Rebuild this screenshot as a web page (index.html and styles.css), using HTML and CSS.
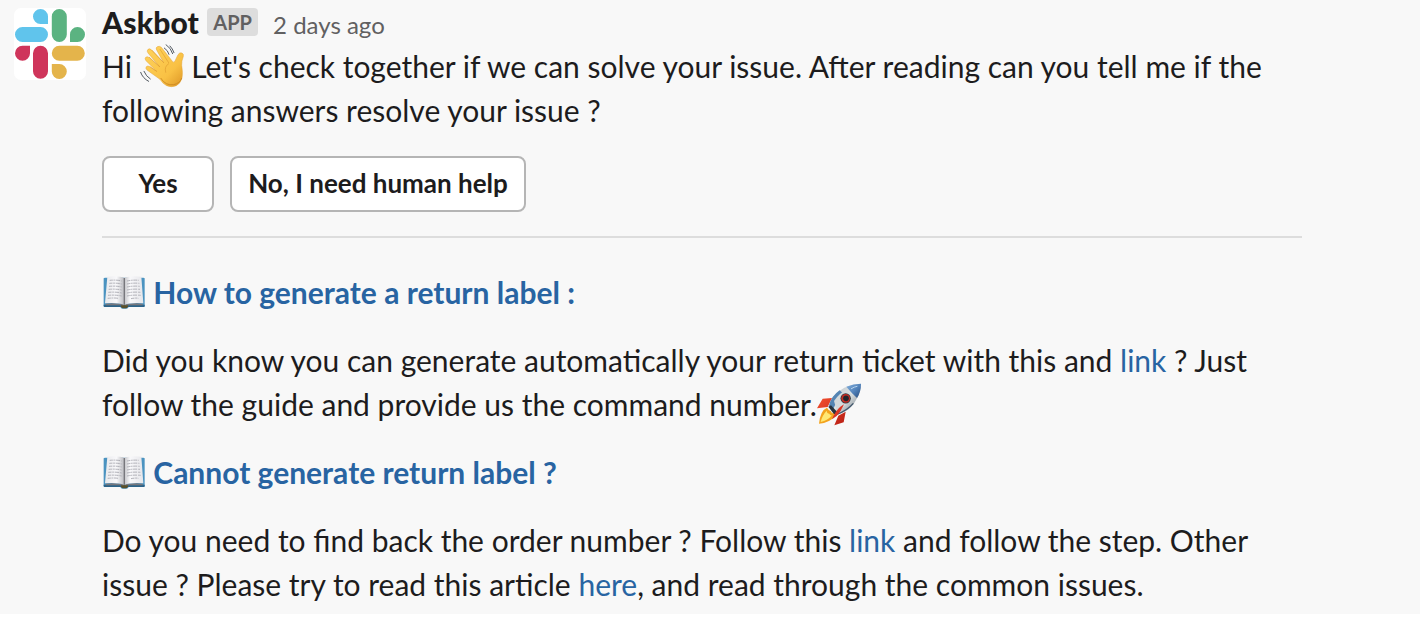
FILE: index.html
```html
<!DOCTYPE html>
<html lang="en">
<head>
<meta charset="utf-8">
<title>Askbot</title>
<link rel="stylesheet" href="styles.css">
</head>
<body>
<svg class="defs" aria-hidden="true">
  <defs>
    <linearGradient id="skin" x1="0" y1="0" x2="1" y2="1"><stop offset="0" stop-color="#ffd35c"/><stop offset=".65" stop-color="#f9c144"/><stop offset="1" stop-color="#dc9424"/></linearGradient>
    <linearGradient id="pageL" x1="0" x2="1"><stop offset="0" stop-color="#e9e9ec"/><stop offset=".6" stop-color="#f8f8fa"/><stop offset="1" stop-color="#b9b9be"/></linearGradient>
    <linearGradient id="pageR" x1="0" x2="1"><stop offset="0" stop-color="#c4c4c8"/><stop offset=".3" stop-color="#f8f8fa"/><stop offset="1" stop-color="#e6e6ea"/></linearGradient>
    <linearGradient id="hull" x1="0" y1="0" x2="1" y2="1"><stop offset=".1" stop-color="#b5c0c8"/><stop offset=".5" stop-color="#dfe3e4"/><stop offset=".95" stop-color="#6d7982"/></linearGradient>
    <linearGradient id="nose" x1="0" y1="0" x2="1" y2="1"><stop offset="0" stop-color="#86b2df"/><stop offset=".55" stop-color="#5080b8"/><stop offset="1" stop-color="#264a7a"/></linearGradient>
    <linearGradient id="fin" x1="0" y1="0" x2="1" y2="1"><stop offset="0" stop-color="#f4502f"/><stop offset="1" stop-color="#b81e14"/></linearGradient>
    <symbol id="book" viewBox="18 18 132 132">
      <path d="M23 43q1-2 4-2h115q3 0 4 2v83q0 3-3 3H98q-2 5-7 5h-12q-4 0-6-5H26q-3 0-3-3z" fill="#4b93c0"/>
      <path d="M23 122h123v4q0 3-3 3H26q-3 0-3-3z" fill="#2c6389"/>
      <path d="M75 122h21v6q-3 5-7 5h-7q-5 0-7-5z" fill="#58502b"/>
      <path d="M29 119q34-3 51 2l5 3 5-3q18-5 50-2v5H29z" fill="#77777d"/>
      <path d="M34 38q37-3 51 4v81q-19-8-58-5z" fill="url(#pageL)"/>
      <path d="M136 38q-37-3-51 4v81q19-8 57-5z" fill="url(#pageR)"/>
      <path d="M85 42v80" stroke="#77777c" stroke-width="4"/>
      <g fill="none" stroke="#a7a7af" stroke-width="2.6" stroke-dasharray="9 2 6 2 12 3"><path d="M41 49q22-2 36 2M40 58q22-2 37 2M39 67q22-2 38 2M38 76q22-2 39 2M37 85q22-2 40 2M36 94q22-2 41 2M35 103q20-2 32 0M93 51q18-4 36-2M93 60q18-4 37-2M93 69q18-4 38-2M93 78q18-4 39-2M93 87q18-4 40-2M93 96q18-4 41-2M105 104q14-3 22-1"/></g>
    </symbol>
  </defs>
</svg>
<main class="message">
  <svg class="avatar" viewBox="0 0 72 72" role="img" aria-label="Askbot">
    <rect width="72" height="72" rx="7" fill="#fff"/>
    <path fill="#60c4ec" d="M34 16h-7.500a7.500 7.500 0 1 1 7.500-7.500zM8.500 19h18a7.500 7.500 0 0 1 0 15h-18a7.500 7.500 0 0 1 0-15z"/>
    <path fill="#5bb381" d="M37.800 8.500a7.500 7.500 0 0 1 15 0v18a7.500 7.500 0 0 1-15 0zM56 34v-7.500a7.500 7.500 0 1 1 7.500 7.500z"/>
    <path fill="#cf355b" d="M16 37.800v7.500a7.500 7.500 0 1 1-7.500-7.500zM19 45.300a7.500 7.500 0 0 1 15 0v18a7.500 7.500 0 0 1-15 0z"/>
    <path fill="#e4b44b" d="M45.300 37.800h18a7.500 7.500 0 0 1 0 15h-18a7.500 7.500 0 0 1 0-15zM37.800 56h7.500a7.500 7.500 0 1 1-7.500 7.500z"/>
  </svg>
  <div class="content">
    <header class="meta">
      <span class="name">Askbot</span>
      <span class="badge">APP</span>
      <span class="time">2 days ago</span>
    </header>
    <p class="text">Hi <svg class="emoji" viewBox="30 24 132 132" role="img" aria-label="Waving hand">
      <path d="M94 34l34 43q4 4 7-2l9-19q5-8 12-5 6 3 4 10-6 15-5 27 4 24 1 38-4 16-17 23-15 6-29 0-11-5-20-19L51 102q-6-6-2-10 4-4 10 0l21 14-32-32q-5-6-1-10 4-4 11 1l31 27-35-41q-5-6 0-11 5-4 11 2l36 38-21-38q-4-7 2-10 6-3 12 2z" fill="url(#skin)" stroke="#e2a334" stroke-width="1.500" stroke-linejoin="round"/>
      <path d="M89 92L58 64M101 80L66 43M80 106L60 92M116 80L90 40M116 83q-14 8-9 26" fill="none" stroke="#df9d31" stroke-width="2" stroke-linecap="round"/>
      <path d="M92 126q15 24 39 20 19-4 24-20" fill="none" stroke="#c98621" stroke-width="2.500"/>
      <path d="M108 26q15 10 20 27M103 36q11 7 14 19M42 106q6 15 19 23M32 109q6 18 24 27M120 30q8 8 12 20" fill="none" stroke="#555c64" stroke-width="3" stroke-linecap="round"/>
    </svg> Let's check together if we can solve your issue. After reading can you tell me if the<br>following answers resolve your issue ?</p>
    <div class="actions">
      <button class="button button-yes">Yes</button>
      <button class="button">No, I need human help</button>
    </div>
    <hr class="divider">
    <h2 class="title"><svg class="emoji" role="img" aria-label="Open book"><use href="#book"/></svg> How to generate a return label :</h2>
    <p class="text">Did you know you can generate automatically your return ticket with this and <a class="link">link</a> ? Just<br>follow the guide and provide us the command number.<svg class="emoji emoji-rocket" viewBox="21 21 132 132" role="img" aria-label="Rocket">
      <path d="M66 66L38 68 21 97l32-4zM85 119l22-12-6 32-28 9z" fill="url(#fin)"/>
      <path d="M51 95q-20 8-24 48 31-1 51-25-5 0-7-7-7 2-8-5-7-2-12-11z" fill="#f3a31d"/>
      <path d="M50 104q-13 13-18 34 22-5 34-20-6 1-8-5-7 0-8-9z" fill="#ffe873"/>
      <path d="M55 92Q67 54 103 35q22-11 50-12 0 24-12 44-17 38-60 50-9-7-26-25z" fill="url(#hull)"/>
      <path d="M109 32q21-9 44-9 0 24-12 43-17-16-32-34z" fill="url(#nose)"/>
      <path d="M57 89q6-28 32-46l14 13q-24 18-34 44z" fill="#5585b3"/>
      <path d="M72 75q16-25 39-34l17 18q-20 31-47 47z" fill="#d3d9db"/>
      <path d="M80 115q31-11 50-33" fill="none" stroke="#40566b" stroke-width="4"/>
      <path d="M55 92l8-4 18 19-2 10-8-4z" fill="#29343d"/>
      <circle cx="107" cy="67" r="15.500" fill="#30383f"/>
      <circle cx="107" cy="67" r="13" fill="#c42b22"/>
      <circle cx="108" cy="67" r="8.500" fill="#22252c"/>
      <path d="M91 92l11-7q-8 20-22 35l-14 10q8-23 25-38z" fill="#da3524"/>
      <path d="M124 38q9-6 17-7" fill="none" stroke="#b8d4ee" stroke-width="3" stroke-linecap="round"/>
    </svg></p>
    <h2 class="title"><svg class="emoji" role="img" aria-label="Open book"><use href="#book"/></svg> Cannot generate return label ?</h2>
    <p class="text">Do you need to find back the order number ? Follow this <a class="link">link</a> and follow the step. Other<br>issue ? Please try to read this article <a class="link">here</a>, and read through the common issues.</p>
  </div>
</main>
</body>
</html>
```
FILE: styles.css
```css
body {
  margin: 0;
  background: #fff;
  font-family: Lato, "Liberation Sans", sans-serif;
  color: #1d1c1d;
}
.defs { position: absolute; width: 0; height: 0; }
.message {
  display: flex;
  gap: 16px;
  box-sizing: border-box;
  height: 614px;
  padding: 8px 0 0 14px;
  background: #f8f8f8;
}
.avatar { width: 72px; height: 72px; flex: none; }
.content { width: 1200px; white-space: nowrap; }
.meta { display: flex; height: 36px; }
.name { font-size: 30px; font-weight: 900; line-height: 28px; letter-spacing: 0.15px; }
.badge {
  box-sizing: border-box;
  width: 51px;
  height: 28px;
  margin-left: 8px;
  border-radius: 4px;
  background: #dddddd;
  color: #616061;
  font-size: 20px;
  font-weight: 700;
  line-height: 29px;
  text-align: center;
}
.time { margin-left: 15px; color: #616061; font-size: 24px; line-height: 34px; }
.text, .title { margin: 0; font-size: 30px; line-height: 44px; }
.text { font-weight: 400; }
.title { margin: 24px 0; color: #2864a2; font-weight: 700; }
.link { color: #2864a2; }
.emoji { width: 44px; height: 44px; vertical-align: top; }
.emoji-rocket { margin: 1px 0 -1px; }
.actions { display: flex; gap: 16px; margin-top: 24px; }
.button {
  box-sizing: border-box;
  width: 296px;
  height: 56px;
  padding: 0 0 2px;
  border: 2px solid #b5b5b5;
  border-radius: 8px;
  background: #fff;
  color: #1d1c1d;
  font: 700 26px/50px Lato, "Liberation Sans", sans-serif;
}
.button-yes { width: 112px; }
.divider { height: 2px; margin: 24px 0 32px; border: 0; background: #dddddd; }
```
